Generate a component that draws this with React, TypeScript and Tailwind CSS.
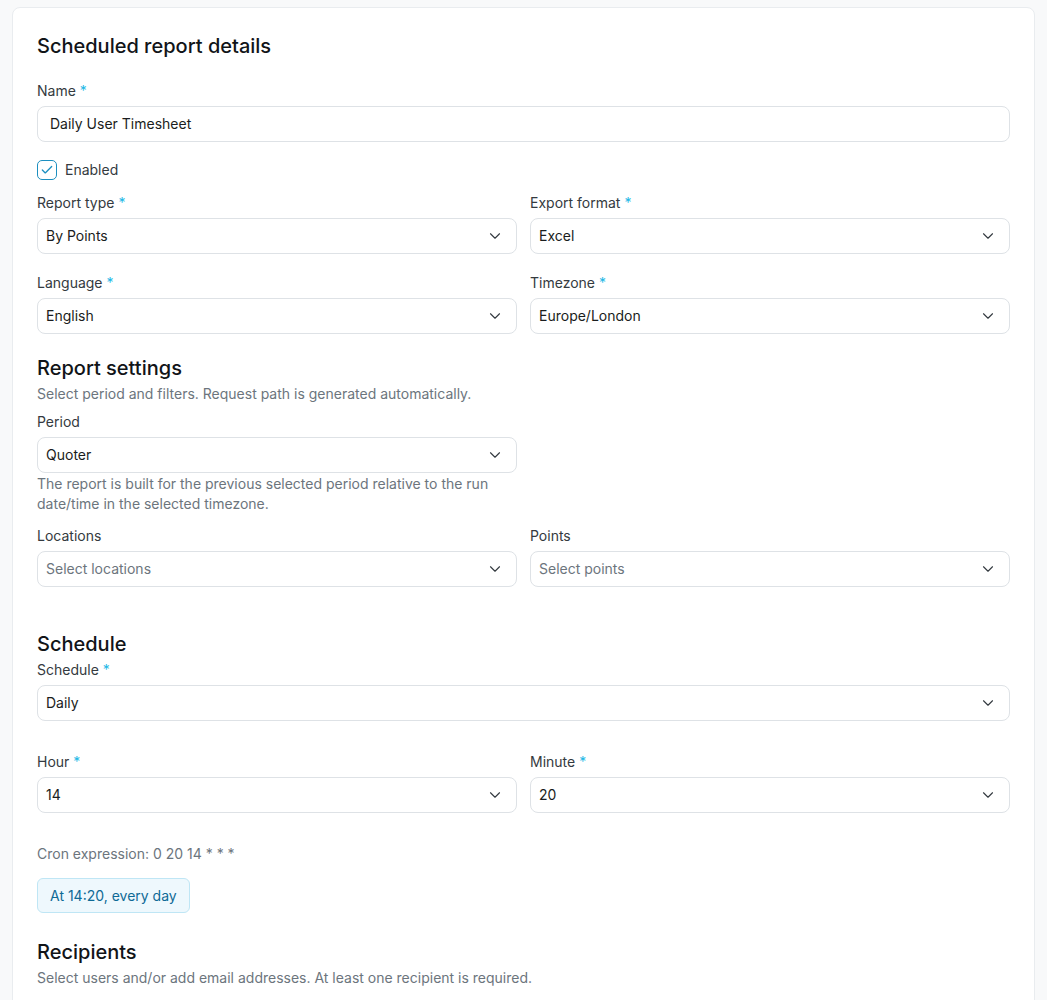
import { ChevronDown, Check } from "lucide-react";

function Label({ text, required }: { text: string; required?: boolean }) {
  return (
    <label className="mb-[5px] block text-sm leading-5 text-[#343a40]">
      {text}
      {required && <span className="ml-1 text-[#22b8e6]">*</span>}
    </label>
  );
}

function Select({ value, placeholder }: { value?: string; placeholder?: string }) {
  return (
    <div className="flex h-9 items-center justify-between rounded-lg border border-[#dee2e6] bg-white pl-2 pr-3">
      <span className={value ? "text-sm text-[#1a1d20]" : "text-sm text-[#6c757d]"}>
        {value ?? placeholder}
      </span>
      <ChevronDown size={18} strokeWidth={1.5} className="text-[#343a40]" />
    </div>
  );
}

function Field({
  label,
  required,
  value,
  placeholder,
}: {
  label: string;
  required?: boolean;
  value?: string;
  placeholder?: string;
}) {
  return (
    <div>
      <Label text={label} required={required} />
      <Select value={value} placeholder={placeholder} />
    </div>
  );
}

function SectionTitle({ title, subtitle }: { title: string; subtitle?: string }) {
  return (
    <div>
      <h3 className="text-xl font-medium leading-7 text-[#111418]">{title}</h3>
      {subtitle && <p className="mt-0.5 text-sm leading-5 text-[#6c757d]">{subtitle}</p>}
    </div>
  );
}

export default function App() {
  return (
    <div
      className="min-h-screen bg-[#f8f9fa] px-3 pt-[7px]"
      style={{ fontFamily: "Inter, 'Noto Sans', sans-serif" }}
    >
      <div className="rounded-lg border border-[#e9ecef] bg-white p-6 pb-10">
        <h2 className="text-xl font-medium leading-7 text-[#111418]">Scheduled report details</h2>

        <div className="mt-[21px]">
          <Label text="Name" required />
          <div className="flex h-9 items-center rounded-lg border border-[#dee2e6] px-3 text-sm text-[#1a1d20]">
            Daily User Timesheet
          </div>
        </div>

        <div className="mt-[18px] flex items-center gap-2">
          <span className="flex h-5 w-5 items-center justify-center rounded-[5px] border-[1.5px] border-[#1c8fc0] bg-white">
            <Check size={14} strokeWidth={2.25} className="text-[#1c8fc0]" />
          </span>
          <span className="text-sm leading-5 text-[#343a40]">Enabled</span>
        </div>

        <div className="mt-[13px] grid grid-cols-2 gap-x-[13px] gap-y-[19px]">
          <Field label="Report type" required value="By Points" />
          <Field label="Export format" required value="Excel" />
          <Field label="Language" required value="English" />
          <Field label="Timezone" required value="Europe/London" />
        </div>

        <div className="mt-5">
          <SectionTitle
            title="Report settings"
            subtitle="Select period and filters. Request path is generated automatically."
          />
        </div>

        <div className="mt-2 grid grid-cols-2 gap-x-[13px]">
          <div>
            <Label text="Period" />
            <Select value="Quoter" />
            <p className="mt-px text-sm leading-5 text-[#6c757d]">
              The report is built for the previous selected period relative to the run date/time in the
              selected timezone.
            </p>
          </div>
        </div>

        <div className="mt-3 grid grid-cols-2 gap-x-[13px]">
          <Field label="Locations" placeholder="Select locations" />
          <Field label="Points" placeholder="Select points" />
        </div>

        <div className="mt-[43px]">
          <SectionTitle title="Schedule" />
        </div>
        <div className="mt-0.5">
          <Field label="Schedule" required value="Daily" />
        </div>

        <div className="mt-[31px] grid grid-cols-2 gap-x-[13px]">
          <Field label="Hour" required value="14" />
          <Field label="Minute" required value="20" />
        </div>

        <p className="mt-[31px] text-sm leading-5 text-[#6c757d]">Cron expression: 0 20 14 * * *</p>
        <div className="mt-[14px] inline-flex h-[35px] items-center rounded-md border border-[#bfe6f5] bg-[#eef8fd] px-3 text-sm text-[#0f6a96]">
          At 14:20, every day
        </div>

        <div className="mt-[25px]">
          <SectionTitle
            title="Recipients"
            subtitle="Select users and/or add email addresses. At least one recipient is required."
          />
        </div>
        <div className="mt-2">
          <Field label="Users" placeholder="Select users" />
        </div>
      </div>
    </div>
  );
}
